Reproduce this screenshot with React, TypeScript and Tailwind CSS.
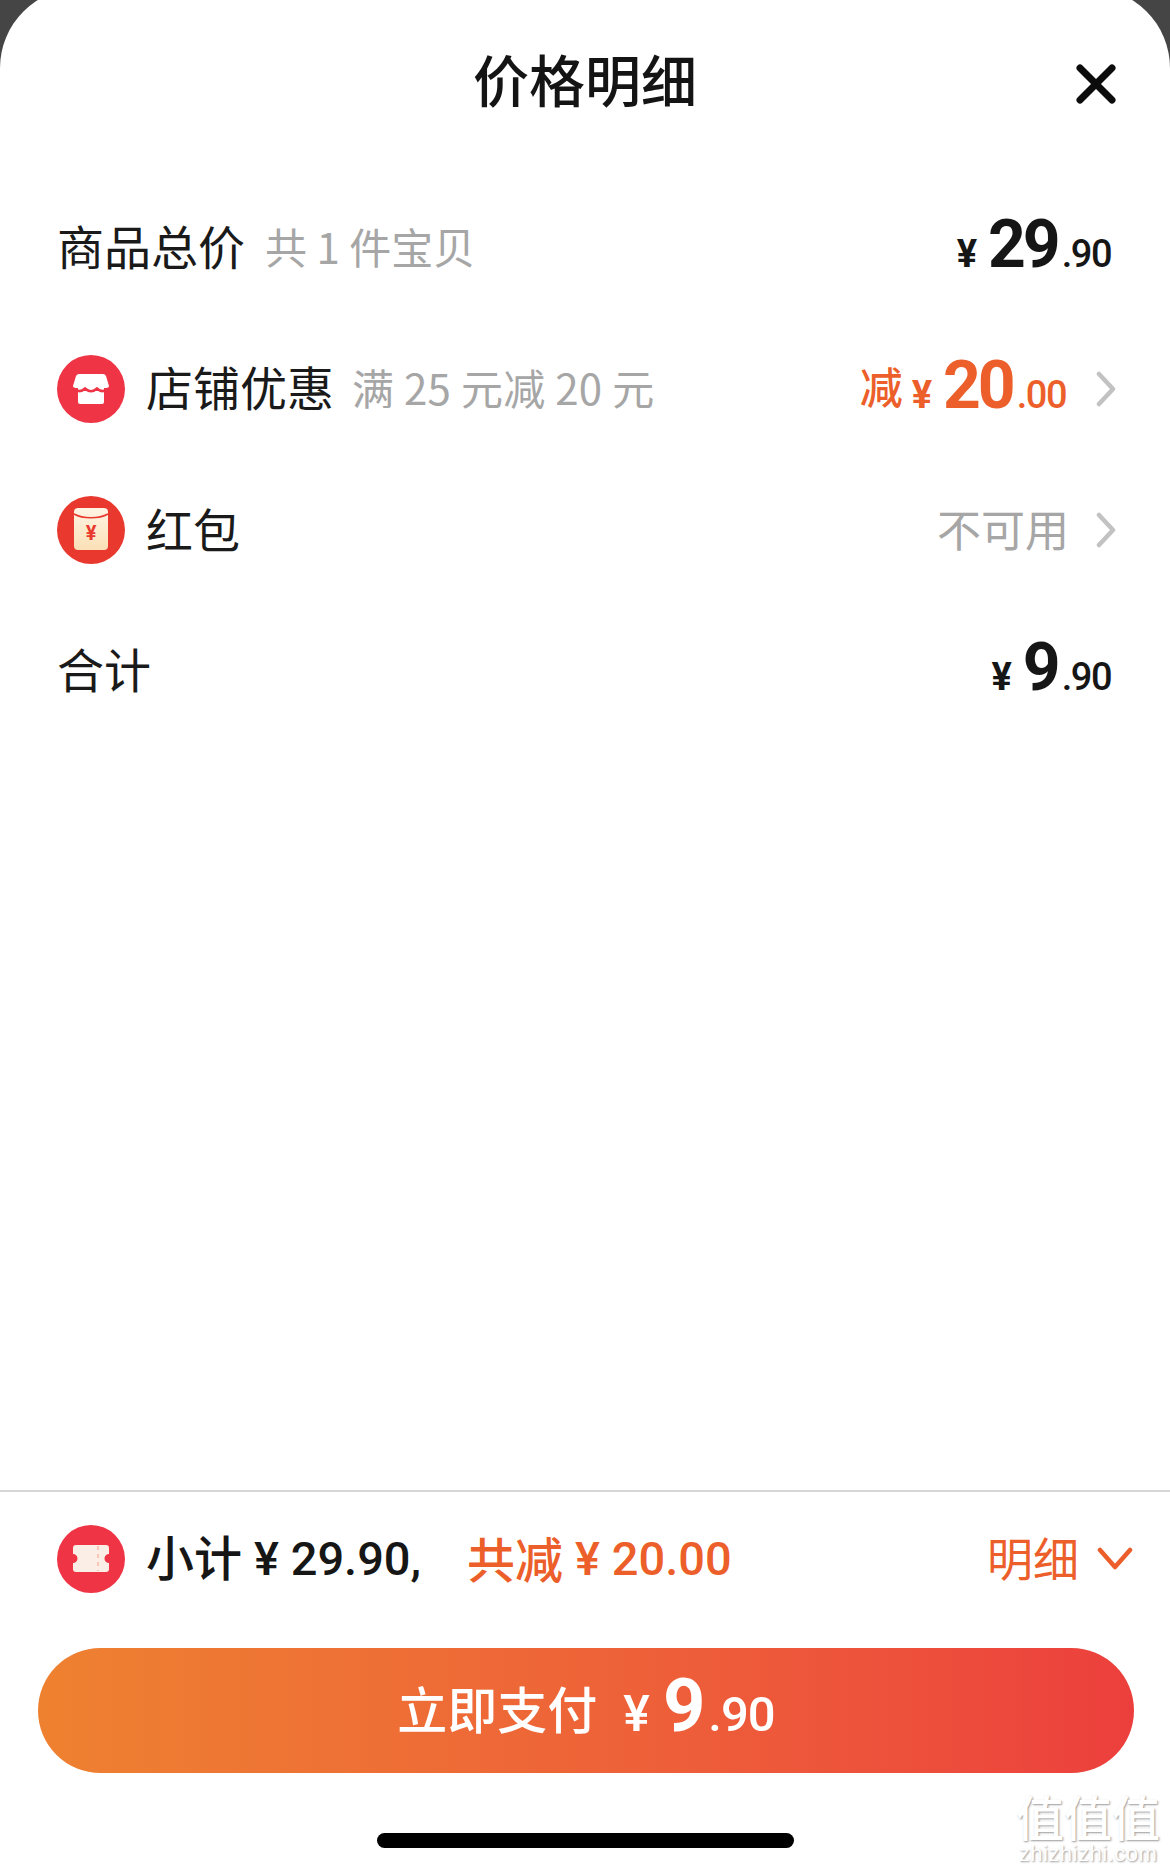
const zh = "font-['Noto_Sans_CJK_SC','Noto_Sans',sans-serif]"

function Price({ big, small, color = 'text-[#161616]', large = false }: { big: string; small: string; color?: string; large?: boolean }) {
  return (
    <span className={`flex items-baseline font-['Roboto',sans-serif] ${color}`}>
      <span className={large ? 'mr-[13px] text-[50px] font-medium' : 'mr-[11px] text-[38px] font-bold'}>¥</span>
      <span className={large ? 'text-[74px] leading-none font-bold tracking-[-3px]' : 'text-[66px] leading-none font-bold tracking-[-3px]'}>{big}</span>
      <span className={large ? 'ml-[6px] text-[49px] font-medium tracking-[-1px]' : 'ml-[4px] text-[38px] font-medium tracking-[-1.5px]'}>{small}</span>
    </span>
  )
}

function Chevron() {
  return (
    <svg width="20" height="36" viewBox="0 0 20 36" className="ml-[30px]" fill="none">
      <path d="M3 3 L17 18 L3 33" stroke="#c2c2c2" strokeWidth="4.5" strokeLinecap="round" strokeLinejoin="round" />
    </svg>
  )
}

function StoreIcon() {
  return (
    <svg width="68" height="68" viewBox="0 0 68 68" className="mr-[21px] shrink-0">
      <circle cx="34" cy="34" r="34" fill="#ee3445" />
      <path d="M22 19 H46 Q48 19 49 21 L52 31 Q52 33 50 33 H47 V47 Q47 49 45 49 H23 Q21 49 21 47 V33 H18 Q16 33 16 31 L19 21 Q20 19 22 19 Z" fill="#fff" />
      <path d="M16 33 Q22 39 28 33.5 Q34 39 40 33.5 Q46 39 52 33" stroke="#ee3445" strokeWidth="2.4" fill="none" />
    </svg>
  )
}

function PacketIcon() {
  return (
    <svg width="68" height="68" viewBox="0 0 68 68" className="mr-[21px] shrink-0">
      <defs>
        <linearGradient id="packet" x1="0" y1="0" x2="0" y2="1">
          <stop offset="0" stopColor="#fff4e4" />
          <stop offset="1" stopColor="#fbe0b6" />
        </linearGradient>
      </defs>
      <circle cx="34" cy="34" r="34" fill="#e9392f" />
      <rect x="17" y="12" width="34" height="42" rx="4" fill="url(#packet)" />
      <path d="M17 18 C26 23 42 23 51 18" stroke="#e9392f" strokeWidth="1.6" fill="none" />
      <text x="34" y="44" textAnchor="middle" fontSize="20" fontWeight="700" fontFamily="Roboto" fill="#e9392f">¥</text>
    </svg>
  )
}

function TicketIcon() {
  return (
    <svg width="68" height="68" viewBox="0 0 68 68" className="mr-[21px] shrink-0">
      <circle cx="34" cy="34" r="34" fill="#ee3445" />
      <path d="M19 20 H49 Q52 20 52 23 V29 A4.5 4.5 0 0 0 52 38 V44 Q52 47 49 47 H19 Q16 47 16 44 V38 A4.5 4.5 0 0 0 16 29 V23 Q16 20 19 20 Z" fill="#fbeee6" />
      <path d="M41 21 V46" stroke="#f6c2ad" strokeWidth="1.8" strokeDasharray="4 4" />
    </svg>
  )
}

export default function App() {
  return (
    <div className={`relative h-[1872px] w-[1170px] overflow-hidden bg-[#454545] ${zh}`}>
      <div className="-mt-[12px] flex h-[1884px] flex-col rounded-t-[80px] bg-white">
        {/* Header */}
        <div className="relative h-[189px] shrink-0">
          <h1 className="pt-[53px] text-center text-[56px] leading-[74px] font-medium text-[#141414]">价格明细</h1>
          <svg width="40" height="40" viewBox="0 0 40 40" className="absolute top-[76px] left-[1076px]" fill="none">
            <path d="M4 4 L36 36 M36 4 L4 36" stroke="#0c0c0c" strokeWidth="7" strokeLinecap="round" />
          </svg>
        </div>

        {/* Rows */}
        <div className="flex h-[141px] items-center justify-between pr-[59px] pl-[57px]">
          <div className="flex items-center pb-[5px]">
            <span className="text-[47px] text-[#1a1a1a]">商品总价</span>
            <span className="ml-[20px] text-[42px] text-[#a6a6a6]">共 1 件宝贝</span>
          </div>
          <Price big="29" small=".90" />
        </div>
        <div className="flex h-[141px] items-center justify-between pr-[54px] pl-[57px]">
          <div className="flex items-center">
            <StoreIcon />
            <div className="flex items-center pb-[4px]">
              <span className="text-[47px] text-[#1a1a1a]">店铺优惠</span>
              <span className="ml-[18px] text-[42px] tracking-[0.3px] text-[#a6a6a6]">满 25 元减 20 元</span>
            </div>
          </div>
          <div className="flex items-center">
            <span className="mr-[9px] pb-[6px] text-[43px] font-medium text-[#ec5f2a]">减</span>
            <Price big="20" small=".00" color="text-[#ec5f2a]" />
            <Chevron />
          </div>
        </div>
        <div className="flex h-[141px] items-center justify-between pr-[54px] pl-[57px]">
          <div className="flex items-center">
            <PacketIcon />
            <span className="pb-[3px] text-[47px] text-[#1a1a1a]">红包</span>
          </div>
          <div className="flex items-center">
            <span className="-mr-[3px] pb-[3px] text-[44px] text-[#a6a6a6]">不可用</span>
            <Chevron />
          </div>
        </div>
        <div className="flex h-[141px] items-center justify-between pr-[59px] pl-[57px]">
          <span className="pb-[5px] text-[47px] text-[#1a1a1a]">合计</span>
          <Price big="9" small=".90" />
        </div>

        {/* Footer */}
        <div className="mt-auto border-t-2 border-[#d6d6d6] pb-[24px]">
          <div className="flex h-[134px] items-center justify-between pr-[37px] pl-[57px]">
            <div className="flex items-center text-[48px] font-medium">
              <TicketIcon />
              <span className="pb-[8px] text-[#161616]">小计</span>
              <span className="ml-[12px] font-['Roboto',sans-serif] text-[47px] text-[#161616]">¥ 29.90,</span>
              <span className="ml-[46px] pb-[4px] text-[#ec5f2a]">共减</span>
              <span className="ml-[12px] font-['Roboto',sans-serif] text-[47px] text-[#ec5f2a]">¥ 20.00</span>
            </div>
            <div className="flex items-center text-[#ec5f2a]">
              <span className="pb-[6px] text-[46px]">明细</span>
              <svg width="36" height="24" viewBox="0 0 36 24" className="ml-[18px]" fill="none">
                <path d="M3 3 L18 20 L33 3" stroke="#ec5f2a" strokeWidth="4.5" strokeLinecap="round" strokeLinejoin="round" />
              </svg>
            </div>
          </div>
          <div className="mt-[22px] mr-[36px] ml-[38px] flex h-[125px] items-center justify-center rounded-full bg-gradient-to-r from-[#ee8130] to-[#ec3f3d] text-white">
            <span className="mr-[26px] pb-[6px] text-[50px] font-medium">立即支付</span>
            <Price big="9" small=".90" color="text-white" large />
          </div>
          <div className="mx-auto mt-[60px] h-[15px] w-[417px] rounded-full bg-black" />
        </div>
      </div>

      {/* Watermark */}
      <div className="absolute right-[7px] bottom-[6px] flex w-[150px] flex-col items-center text-white [text-shadow:1px_1px_2px_#9a9a9a]">
        <span className="text-[48px] leading-[54px] font-medium">值值值</span>
        <span className="font-['Liberation_Sans',sans-serif] text-[22px] leading-[24px] tracking-[0.5px]">zhizhizhi.com</span>
      </div>
    </div>
  )
}
